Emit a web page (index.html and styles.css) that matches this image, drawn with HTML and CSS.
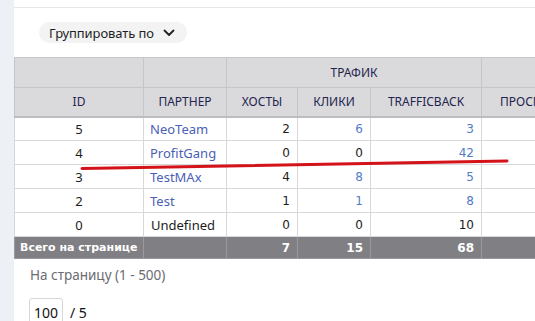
FILE: index.html
```html
<!DOCTYPE html>
<html>
<head>
<meta charset="utf-8">
<link rel="stylesheet" href="styles.css">
</head>
<body>
<div class="side"></div>
<div class="main">
  <div class="topbar"></div>
  <div class="toolbar">
    <button class="group-btn">Группировать по
      <svg class="chev" width="12" height="8" viewBox="0 0 12 8"><path d="M1.5 1.5 L6 6 L10.5 1.5" fill="none" stroke="#222" stroke-width="1.8" stroke-linecap="round" stroke-linejoin="round"/></svg>
    </button>
  </div>
  <div class="table-wrap">
    <table class="grid">
      <colgroup>
        <col class="c-id"><col class="c-partner"><col class="c-hosts"><col class="c-clicks"><col class="c-tb"><col class="c-views">
      </colgroup>
      <thead>
        <tr class="h1">
          <th></th><th></th><th colspan="3">ТРАФИК</th><th></th>
        </tr>
        <tr class="h2">
          <th>ID</th><th>ПАРТНЕР</th><th>ХОСТЫ</th><th>КЛИКИ</th><th>TRAFFICBACK</th><th class="left">ПРОСМОТРЫ</th>
        </tr>
      </thead>
      <tbody>
        <tr><td class="id">5</td><td class="link">NeoTeam</td><td class="num">2</td><td class="num blue">6</td><td class="num blue">3</td><td></td></tr>
        <tr><td class="id">4</td><td class="link">ProfitGang</td><td class="num">0</td><td class="num">0</td><td class="num blue">42</td><td></td></tr>
        <tr><td class="id">3</td><td class="link">TestMAx</td><td class="num">4</td><td class="num blue">8</td><td class="num blue">5</td><td></td></tr>
        <tr><td class="id">2</td><td class="link">Test</td><td class="num">1</td><td class="num blue">1</td><td class="num blue">8</td><td></td></tr>
        <tr><td class="id">0</td><td>Undefined</td><td class="num">0</td><td class="num">0</td><td class="num">10</td><td></td></tr>
      </tbody>
      <tfoot>
        <tr><td class="total-label">Всего на странице</td><td></td><td class="num">7</td><td class="num">15</td><td class="num">68</td><td></td></tr>
      </tfoot>
    </table>
    <svg class="mark" width="535" height="20" viewBox="0 0 535 20"><path d="M82 11.5 L507 4" stroke="#d4121a" stroke-width="3" stroke-linecap="round" fill="none"/></svg>
  </div>
  <div class="per-page">На страницу (1 - 500)</div>
  <div class="pager">
    <span class="page-input">100</span><span class="pages">/ 5</span>
  </div>
</div>
</body>
</html>
```
FILE: styles.css
```css
* { box-sizing: border-box; }
html, body { margin: 0; padding: 0; }
body {
  display: flex;
  width: 535px;
  height: 321px;
  overflow: hidden;
  background: #fff;
  font-family: "Noto Sans", "DejaVu Sans", sans-serif;
  color: #222;
}
.side {
  width: 14px;
  flex: none;
  background: #edf0f5;
}
.main {
  flex: 1;
  min-width: 0;
  position: relative;
}
.topbar {
  height: 8px;
  border-bottom: 1px solid #e7e7e9;
}
.toolbar {
  padding: 14px 0 0 25px;
  height: 49px;
}
.group-btn {
  display: flex;
  align-items: center;
  gap: 9px;
  height: 21px;
  padding: 0 12px 0 10px;
  border: none;
  border-radius: 11px;
  background: #f3f3f4;
  font-family: "Noto Sans", sans-serif;
  font-size: 13px;
  color: #1e1e24;
  letter-spacing: -0.1px;
}
.chev { margin-top: 1px; }
.table-wrap {
  position: relative;
  width: 521px;
  overflow: hidden;
}
.grid {
  border-collapse: collapse;
  table-layout: fixed;
  width: 600px;
  font-size: 12px;
}
.c-id { width: 129px; }
.c-partner { width: 83px; }
.c-hosts { width: 71px; }
.c-clicks { width: 73px; }
.c-tb { width: 111px; }
.c-views { width: 133px; }
.grid th {
  background: #dadadc;
  border: 1px solid #c6c6c8;
  font-weight: 400;
  font-size: 12px;
  color: #23234f;
  text-align: center;
  padding: 0 6px;
}
.grid th.left { text-align: left; padding-left: 18px; }
.grid tr.h1 th { height: 30px; }
.grid tr.h2 th { height: 29px; border-bottom: 2px solid #bdbdc0; }
.grid td {
  border: 1px solid #d8d8da;
  height: 24px;
  padding: 0 7px;
  font-size: 13px;
  color: #1c1c1c;
}
.grid td.id { text-align: center; }
.grid td.link { color: #4a5fb5; padding-left: 6px; }
.grid td.num { text-align: right; font-family: "DejaVu Sans", sans-serif; font-size: 12px; }
.grid td.blue { color: #4f7cc4; }
.grid tfoot td {
  background: #808084;
  color: #fff;
  height: 22px;
  font-weight: 700;
  border-color: #9a9a9e;
  font-size: 12px;
}
.grid tfoot td.total-label { padding-left: 5px; white-space: nowrap; overflow: visible; font-family: "DejaVu Sans", sans-serif; font-size: 11px; }
.mark {
  position: absolute;
  left: -14px;
  top: 100px;
  pointer-events: none;
}
.per-page {
  padding: 7px 0 0 16px;
  height: 39px;
  font-size: 13.5px;
  color: #6b6b72;
}
.pager {
  display: flex;
  align-items: center;
  gap: 7px;
  padding-left: 15px;
}
.page-input {
  display: inline-flex;
  align-items: center;
  justify-content: center;
  width: 34px;
  height: 28px;
  border: 1px solid #d6d6d8;
  border-radius: 3px;
  font-size: 14px;
  color: #111;
}
.pages { font-size: 14px; color: #111; }
```
